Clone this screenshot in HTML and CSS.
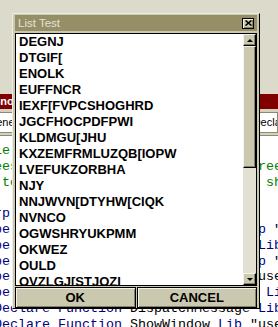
FILE: index.html
```html
<!DOCTYPE html>
<html lang="en">

<head>
    <meta charset="UTF-8" />
    <title>List Test</title>
    <link rel="stylesheet" href="styles.css">
</head>

<body>
    <!-- code window behind the dialog -->
    <div class="codewin">
        <div class="cw-title"><span>Snoop (Code)</span></div>
        <div class="cw-combos">
            <div class="combo combo-left">(General)</div>
            <div class="combo combo-right">(Declarations)</div>
        </div>
        <div class="cw-pane">
            <div class="ln"><span class="cm">le pending messages for the form</span></div>
            <div class="ln"><span class="cm">ees and keeps the message queue free</span></div>
            <div class="ln"><span class="cm"> to let Windows repaint the form  show it</span></div>
            <div class="ln"> </div>
            <div class="ln"><span class="kw">rp</span> As Long</div>
            <div class="ln"><span class="kw">pe Declare Function</span> PeekMessage  <span class="kw">p</span> "</div>
            <div class="ln"><span class="kw">pe Declare Function</span> GetMessage   <span class="kw">Lib</span></div>
            <div class="ln"><span class="kw">pe Declare Function</span> PostMessage  <span class="kw">p</span> "</div>
            <div class="ln"><span class="kw">pe Declare Function</span> SendMessage  use</div>
            <div class="ln"><span class="kw">pe Declare Function</span> SetFocus      <span class="kw">Li</span></div>
            <div class="ln"><span class="kw">Declare Function</span> DispatchMessage <span class="kw">Lib</span> "user32" <span class="kw">Alias</span> "DispatchMessageA"</div>
            <div class="ln"><span class="kw">Declare Function</span> ShowWindow <span class="kw">Lib</span> "user32" (<span class="kw">ByVal</span> hwnd <span class="kw">As Long</span>)</div>
        </div>
    </div>

    <div class="dialog">
        <div class="dlg-title">
            <span>List Test</span>
            <div class="close-btn">
                <svg width="7" height="6" viewBox="0 0 7 6">
                    <path d="M0.5 0.5 L6.5 5.5 M6.5 0.5 L0.5 5.5" stroke="#000" stroke-width="1.6" />
                </svg>
            </div>
        </div>
        <div class="listbox">
            <div class="items">
                <div class="item">DEGNJ</div>
                <div class="item">DTGIF[</div>
                <div class="item">ENOLK</div>
                <div class="item">EUFFNCR</div>
                <div class="item">IEXF[FVPCSHOGHRD</div>
                <div class="item">JGCFHOCPDFPWI</div>
                <div class="item">KLDMGU[JHU</div>
                <div class="item">KXZEMFRMLUZQB[IOPW</div>
                <div class="item">LVEFUKZORBHA</div>
                <div class="item">NJY</div>
                <div class="item">NNJWVN[DTYHW[CIQK</div>
                <div class="item">NVNCO</div>
                <div class="item">OGWSHRYUKPMM</div>
                <div class="item">OKWEZ</div>
                <div class="item">OULD</div>
                <div class="item">OVZLGJ[STJOZI</div>
            </div>
            <div class="scrollbar">
                <div class="sb-btn"><span class="arrow-up"></span></div>
                <div class="sb-thumb"></div>
                <div class="sb-track"></div>
                <div class="sb-btn"><span class="arrow-down"></span></div>
            </div>
        </div>
        <div class="buttons">
            <button class="btn">OK</button>
            <button class="btn">CANCEL</button>
        </div>
    </div>
</body>

</html>
```

FILE: styles.css
```css
* {
    box-sizing: border-box;
}

body {
    margin: 0;
    width: 278px;
    height: 327px;
    overflow: hidden;
    position: relative;
    background-color: #dcdacb;
    font-family: "Liberation Sans", Arial, sans-serif;
}

/* code window */
.codewin {
    position: absolute;
    left: 0;
    top: 94px;
    right: 0;
    bottom: 0;
    background-color: #fff;
    overflow: hidden;
}

.cw-title {
    height: 15px;
    background-color: #800000;
    color: #fff;
    font-weight: bold;
    font-size: 11px;
    line-height: 15px;
    white-space: nowrap;
}

.cw-title span {
    margin-left: -7px;
}

.cw-combos {
    height: 27px;
    display: flex;
    align-items: center;
    background-color: #d4d1bd;
    border-bottom: 1px solid #8c8a76;
}

.combo {
    height: 21px;
    background-color: #fff;
    border: 1px solid #8c8a76;
    font-size: 11px;
    line-height: 19px;
    padding-left: 3px;
    white-space: nowrap;
    overflow: hidden;
}

.combo-left {
    margin-left: -20px;
    width: 240px;
    flex-shrink: 0;
}

.combo-right {
    margin-left: 25px;
    flex: 1;
    min-width: 0;
}

.cw-pane {
    margin-left: -6px;
    padding-top: 7px;
    font-family: "Liberation Mono", "Courier New", monospace;
    font-size: 13.333px;
}

.ln {
    height: 15.8px;
    line-height: 15.8px;
    white-space: pre;
    color: #000;
}

.cm {
    color: #008000;
}

.kw {
    color: #00007f;
}

/* dialog */
.dialog {
    position: absolute;
    left: 12px;
    top: 13px;
    width: 248px;
    height: 296px;
    background-color: #cbc8b0;
    border: 1px solid;
    border-color: #eeede4 #000 #000 #eeede4;
    padding: 1px 2px 0;
    display: flex;
    flex-direction: column;
}

.dlg-title {
    height: 16px;
    flex-shrink: 0;
    background-color: #958e66;
    color: #e4e2d6;
    font-size: 11.5px;
    display: flex;
    align-items: center;
    justify-content: space-between;
    padding: 0 3px;
}

.close-btn {
    width: 12px;
    height: 11px;
    background-color: #cbc8b0;
    border: 1px solid #000;
    box-shadow: inset 1px 1px #f4f3ea, inset -1px -1px #86836b;
    display: flex;
    align-items: center;
    justify-content: center;
}

.listbox {
    margin-top: 2px;
    height: 253px;
    flex-shrink: 0;
    border: 1px solid #000;
    background-color: #fff;
    display: flex;
}

.items {
    flex: 1;
    overflow: hidden;
    padding-left: 3px;
    font-weight: bold;
    font-size: 13px;
    line-height: 16px;
    color: #000;
}

.item {
    height: 16px;
    white-space: nowrap;
}

.scrollbar {
    width: 13px;
    display: flex;
    flex-direction: column;
    background-color: #e2e0d2;
}

.sb-btn {
    height: 12px;
    background-color: #cbc8b0;
    border: 1px solid;
    border-color: #f4f3ea #000 #000 #f4f3ea;
    box-shadow: inset -1px -1px #86836b;
    display: flex;
    align-items: center;
    justify-content: center;
}

.sb-thumb {
    height: 122px;
    background-color: #cbc8b0;
    border: 1px solid;
    border-color: #f4f3ea #000 #000 #f4f3ea;
    box-shadow: inset -1px -1px #86836b;
}

.sb-track {
    flex: 1;
}

.arrow-up {
    border-left: 3px solid transparent;
    border-right: 3px solid transparent;
    border-bottom: 3px solid #000;
}

.arrow-down {
    border-left: 3px solid transparent;
    border-right: 3px solid transparent;
    border-top: 3px solid #000;
}

.buttons {
    margin-top: 1px;
    height: 21px;
    display: grid;
    grid-template-columns: 1fr 1fr;
    gap: 1px;
}

.btn {
    background-color: #cbc8b0;
    border: 1px solid #000;
    box-shadow: inset 1px 1px #f4f3ea, inset -1px -1px #86836b;
    font-family: "Liberation Sans", Arial, sans-serif;
    font-weight: bold;
    font-size: 13px;
    color: #000;
    padding: 0;
}
```
